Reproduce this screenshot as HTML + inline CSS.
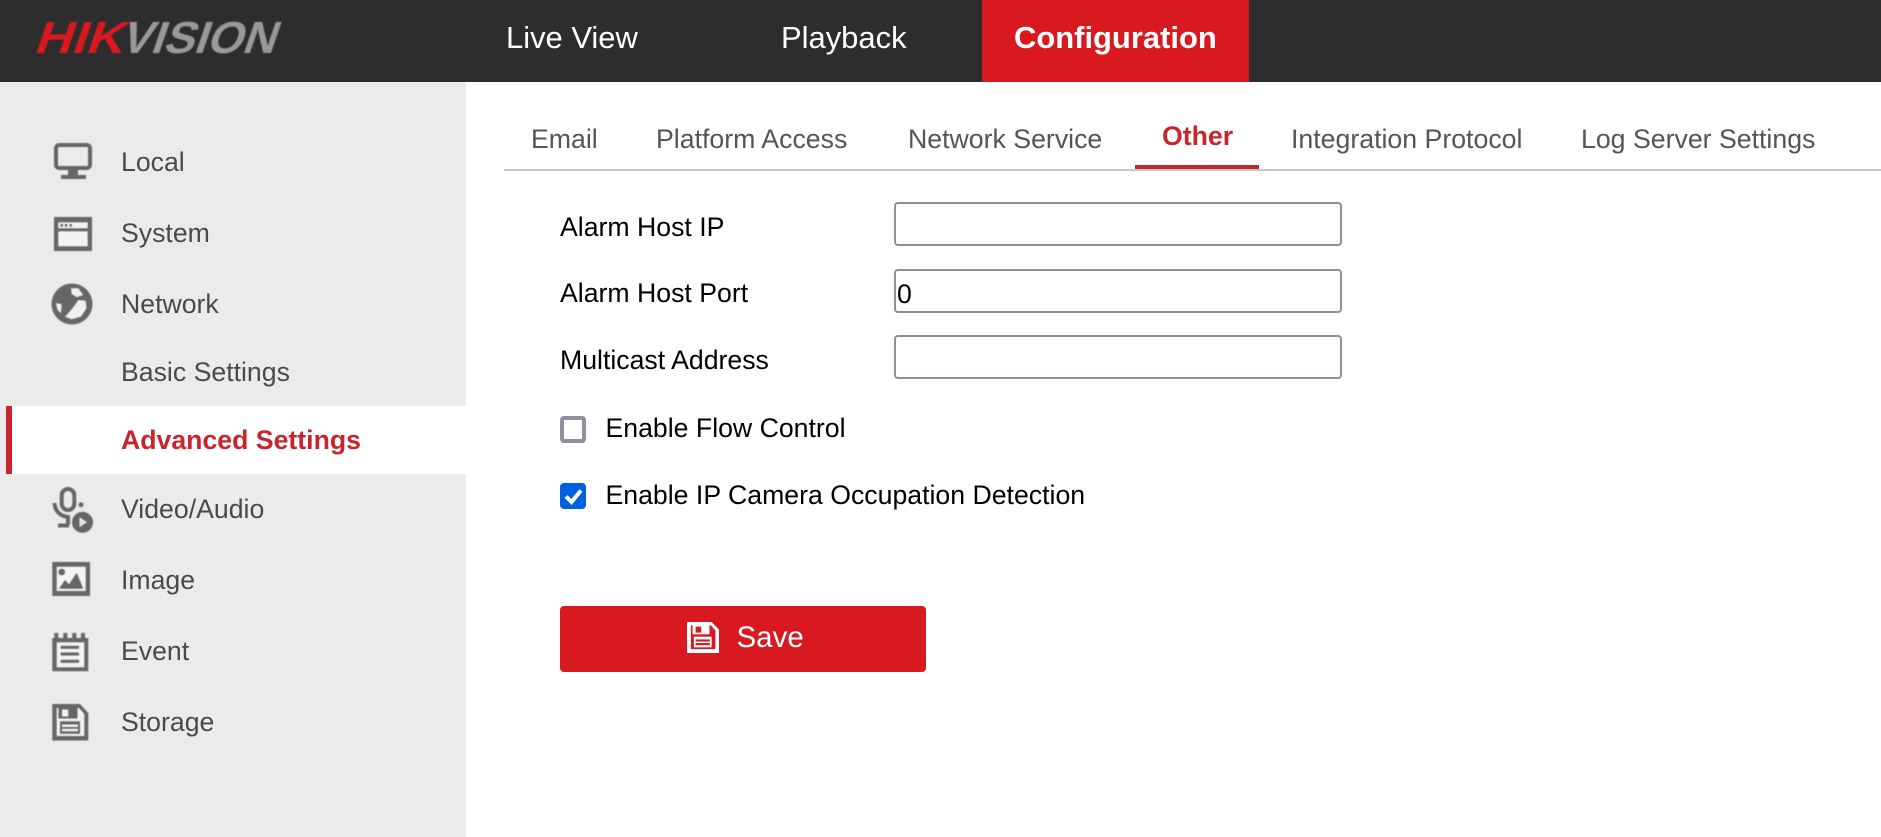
<!DOCTYPE html>
<html><head><meta charset="utf-8"><title>Configuration</title>
<style>
html,body{margin:0;padding:0;background:#fff;width:1881px;height:837px;overflow:hidden}
body{position:relative;font-family:"Liberation Sans",Arial,sans-serif}
.a{position:absolute}
.t{position:absolute;line-height:30px;font-size:26.67px;white-space:nowrap}
.s{color:#4a4a4a}.tab{color:#555;font-size:26.7px}.k{color:#000}
.n{color:#fff;font-size:30.95px}
.in{position:absolute;left:894px;width:444px;height:40px;border:2px solid #8f8f9d;border-radius:4px;background:#fff}
svg{position:absolute;overflow:visible}
</style></head><body>
<div class="a" style="left:0;top:0;width:1881px;height:82px;background:#2d2d2d"></div>
<div class="a" style="left:982px;top:0;width:267px;height:82px;background:#d81a20"></div>
<svg style="left:0;top:0" width="300" height="82"><g style="filter:blur(.6px)" font-family="'Liberation Sans',sans-serif" font-weight="700" font-size="45">
<text transform="translate(33 53) skewX(-19)" fill="#d81a20" textLength="89" lengthAdjust="spacingAndGlyphs">HIK</text>
<text transform="translate(119 53) skewX(-19)" fill="#999" textLength="155" lengthAdjust="spacingAndGlyphs">VISION</text></g></svg>
<div class="t n" style="left:506px;top:23px">Live View</div>
<div class="t n" style="left:781px;top:23px">Playback</div>
<div class="t n" style="left:1014px;top:23px;font-weight:700">Configuration</div>

<div class="a" style="left:0;top:82px;width:466px;height:755px;background:#ebebeb"></div>
<div class="a" style="left:6px;top:406px;width:460px;height:68px;background:#fff"></div>
<div class="a" style="left:6px;top:406px;width:6px;height:68px;background:#c9252d"></div>

<svg style="left:0;top:0" width="120" height="760" fill="#666">
<g style="filter:blur(.45px)">
<!-- monitor -->
<rect x="56" y="145" width="34" height="23" rx="3" fill="none" stroke="#666" stroke-width="4"/>
<path d="M68 170h10v5h-10zM61 175h25v4h-25z"/>
<!-- window -->
<rect x="54" y="217" width="38" height="34"/>
<rect x="58.300" y="222.300" width="29.400" height="6" fill="#f3f3f3"/>
<rect x="58.300" y="231.300" width="29.400" height="15" fill="#f3f3f3"/>
<circle cx="61.700" cy="225.300" r="1.400"/><circle cx="66" cy="225.300" r="1.400"/><circle cx="70.700" cy="225.300" r="1.400"/>
<!-- globe -->
<circle cx="72" cy="304" r="20.500"/>
<path d="M78.300 300L85.700 300.700 86.500 308.300 81 316.700 71.700 319.300 65 316.700 71.700 309.300 75 305zM71 288.300L78.300 288.300 83.300 295 76.700 297.300 71.700 294zM55.700 303.300L61.700 304 61 313.300 57.700 310z" fill="#f0f0f0"/>
<!-- mic -->
<rect x="61.700" y="489" width="12.600" height="21" rx="6.300" fill="none" stroke="#666" stroke-width="4"/>
<path d="M54.500 503C55 511 60 516 68 517v8M58 525.500h11" fill="none" stroke="#666" stroke-width="4"/>
<circle cx="81" cy="504.700" r="2.500"/>
<circle cx="82.500" cy="522.300" r="10.500"/>
<path d="M79.500 517l7.500 5.300-7.500 5z" fill="#e6e6e6"/>
<!-- image -->
<rect x="52.300" y="562" width="37.700" height="34"/>
<rect x="56.700" y="566.700" width="29" height="24.300" fill="#f3f3f3"/>
<circle cx="61.700" cy="572" r="3.300"/>
<path d="M59 588.700L65 580 69 584.300 76.700 572.700 83.300 588.700z"/>
<!-- event -->
<path d="M52.300 638h2v-5h4v5h5v-5h4v5h5v-5h4v5h4.700v-5h4v5h3.300v33.300h-36z"/>
<rect x="56.700" y="642.300" width="27.600" height="25" fill="#f3f3f3"/>
<rect x="60.700" y="645.800" width="18.300" height="3"/><rect x="60.700" y="652.500" width="18.300" height="3"/><rect x="60.700" y="659.800" width="18.300" height="3"/>
<!-- storage -->
<path d="M52.300 704H80L88.300 713V740.500H52.300z"/>
<path d="M56.700 708H79L84.300 714V736H56.700z" fill="#f3f3f3"/>
<rect x="58.500" y="707.500" width="19" height="11"/>
<rect x="62" y="709.500" width="6.300" height="7" fill="#f3f3f3"/>
<rect x="60" y="721.300" width="20" height="12.500"/>
<rect x="62" y="724.500" width="16" height="2.500" fill="#f3f3f3"/><rect x="62" y="728.800" width="16" height="2.500" fill="#f3f3f3"/>
</g></svg>

<div class="t s" style="left:121px;top:147px">Local</div>
<div class="t s" style="left:121px;top:218px">System</div>
<div class="t s" style="left:121px;top:289px">Network</div>
<div class="t s" style="left:121px;top:357px">Basic Settings</div>
<div class="t" style="left:121px;top:425px;color:#c9252d;font-weight:700">Advanced Settings</div>
<div class="t s" style="left:121px;top:494px">Video/Audio</div>
<div class="t s" style="left:121px;top:565px">Image</div>
<div class="t s" style="left:121px;top:636px">Event</div>
<div class="t s" style="left:121px;top:707px">Storage</div>

<div class="t tab" style="left:531px;top:124px">Email</div>
<div class="t tab" style="left:656px;top:124px">Platform Access</div>
<div class="t tab" style="left:908px;top:124px">Network Service</div>
<div class="t" style="left:1162px;top:121px;color:#c9252d;font-weight:700">Other</div>
<div class="t tab" style="left:1291px;top:124px">Integration Protocol</div>
<div class="t tab" style="left:1581px;top:124px">Log Server Settings</div>
<div class="a" style="left:504px;top:169px;width:1377px;height:2px;background:#c8c8c8"></div>
<div class="a" style="left:1135px;top:165px;width:124px;height:4px;background:#c9252d"></div>

<div class="t k" style="left:560px;top:212px">Alarm Host IP</div>
<div class="t k" style="left:560px;top:278px">Alarm Host Port</div>
<div class="t k" style="left:560px;top:345px">Multicast Address</div>
<div class="in" style="top:202px"></div>
<div class="in" style="top:269px"></div>
<div class="in" style="top:335px"></div>
<div class="t k" style="left:897px;top:279px">0</div>

<div class="a" style="left:560px;top:416px;width:18px;height:19px;border:4px solid #8f8f9d;border-radius:4px;background:#fff"></div>
<div class="a" style="left:560px;top:483px;width:26px;height:26px;border-radius:4px;background:#0060df"></div>
<svg style="left:560px;top:483px" width="26" height="26"><path d="M6 13.500l5.500 5.500 9.500-11.500" fill="none" stroke="#fff" stroke-width="4"/></svg>
<div class="t k" style="left:605.500px;top:413px">Enable Flow Control</div>
<div class="t k" style="left:605.500px;top:480px">Enable IP Camera Occupation Detection</div>

<div class="a" style="left:560px;top:606px;width:366px;height:66px;border-radius:4px;background:#d81a20"></div>
<svg style="left:687px;top:622px" width="32" height="31" viewBox="52.300 704 36 36.500" preserveAspectRatio="none" fill="#fff">
<g style="filter:blur(.4px)">
<path d="M52.300 704H80L88.300 713V740.500H52.300z"/>
<path d="M56.700 708H79L84.300 714V736H56.700z" fill="#d81a20"/>
<rect x="58.500" y="707.500" width="19" height="11"/>
<rect x="62" y="709.500" width="6.300" height="7" fill="#d81a20"/>
<rect x="60" y="721.300" width="20" height="12.500"/>
<rect x="62" y="724.500" width="16" height="2.500" fill="#d81a20"/><rect x="62" y="728.800" width="16" height="2.500" fill="#d81a20"/>
</g></svg>
<div class="t" style="left:736.500px;top:623px;color:#fff;font-size:29.500px">Save</div>
</body></html>
